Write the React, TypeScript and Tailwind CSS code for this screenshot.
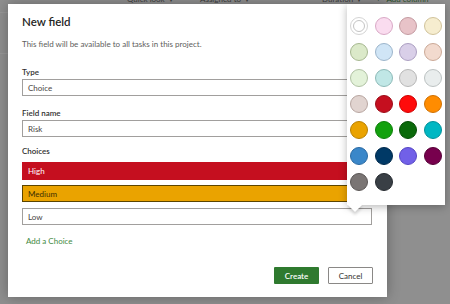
const swatches = [
  ["#ffffff", "#c8c8c8"],
  ["#fadcef", "#d9a9c6"],
  ["#e8c3c8", "#c49aa1"],
  ["#f6edcf", "#d1c39b"],
  ["#dbe9c9", "#a7b891"],
  ["#d0e5f6", "#9cb5cb"],
  ["#d9cfe8", "#ac9fc2"],
  ["#f2dace", "#cba997"],
  ["#e3f2d9", "#b0c2a3"],
  ["#c0e7e6", "#8dbab8"],
  ["#e1e1e1", "#b7b7b7"],
  ["#e9eded", "#bcc2c2"],
  ["#e1d4d0", "#b8a6a1"],
  ["#c50f1f", "#9d0c18"],
  ["#ff0b0b", "#d00000"],
  ["#ff8c00", "#d07000"],
  ["#eaa300", "#b98100"],
  ["#13a10e", "#0d800a"],
  ["#0b6a0b", "#064d06"],
  ["#00b7c3", "#00919a"],
  ["#3a87c9", "#2a6aa3"],
  ["#003966", "#002a4c"],
  ["#7160e8", "#5646c4"],
  ["#77004d", "#560037"],
  ["#7a7574", "#5b5756"],
  ["#393f45", "#262b30"],
];

const font = { fontFamily: 'Lato, "Noto Sans", sans-serif' };

function ColorPicker() {
  return (
    <div className="absolute left-[347px] top-[4px] w-[98px] h-[201px] bg-white shadow-[0_2px_8px_rgba(0,0,0,0.28)]">
      <div className="grid grid-cols-[repeat(4,18px)] gap-x-[6.5px] gap-y-[8px] pl-[3px] pt-[13px]">
        {swatches.map(([bg, border], i) =>
          i === 0 ? (
            <div
              key={i}
              className="w-[18px] h-[18px] rounded-full border border-[#d4d4d4] bg-white flex items-center justify-center"
            >
              <div className="w-[12px] h-[12px] rounded-full border border-[#c4c4c4]" />
            </div>
          ) : (
            <div
              key={i}
              className="w-[18px] h-[18px] rounded-full border"
              style={{ background: bg, borderColor: border }}
            />
          )
        )}
      </div>
      <div className="absolute left-[3px] top-[196px] w-[10px] h-[10px] bg-white rotate-45 shadow-[2px_2px_3px_rgba(0,0,0,0.15)]" />
    </div>
  );
}

function Label({ children }: { children: string }) {
  return <div className="text-[8px] leading-[12px] font-semibold text-[#323130]">{children}</div>;
}

function TextBox({ value }: { value: string }) {
  return (
    <div className="h-[17px] border border-[#a19f9d] bg-white pl-[5px] flex items-center text-[8px] text-[#484644]">
      {value}
    </div>
  );
}

export default function App() {
  return (
    <div className="relative w-[450px] h-[304px] overflow-hidden bg-[#8f8f8f]" style={font}>
      {/* page behind the overlay */}
      <div className="flex items-center h-[8px] -mt-[5px] text-[8px] text-[#3d3d3d] whitespace-nowrap">
        <span className="ml-[127px] w-[73px]">Quick look&nbsp;&nbsp;▾</span>
        <span className="w-[122px]">Assigned to&nbsp;&nbsp;▾</span>
        <span className="w-[54px]">Duration&nbsp;&nbsp;▾</span>
        <span className="text-[#2b4f2b]">+&nbsp;&nbsp;&nbsp;Add column</span>
      </div>
      <div className="h-px w-[10px] bg-[#979797] mt-[9px]" />
      <div className="h-px w-[10px] bg-[#979797] mt-[40px]" />

      {/* dialog */}
      <div className="absolute left-[8px] top-[4px] w-[379px] h-[293px] bg-white shadow-[0_0_12px_rgba(0,0,0,0.3)] px-[14px] flex flex-col">
        <div className="mt-[7px] text-[11.5px] leading-[22px] font-semibold text-[#252423]">New field</div>
        <div className="mt-[5px] text-[8px] leading-[12px] text-[#605e5c]">
          This field will be available to all tasks in this project.
        </div>
        <div className="mt-[16px] w-[350px] flex flex-col">
          <Label>Type</Label>
          <div className="mt-[1px]">
            <TextBox value="Choice" />
          </div>
          <div className="mt-[11px]">
            <Label>Field name</Label>
          </div>
          <div className="mt-[1px]">
            <TextBox value="Risk" />
          </div>
          <div className="mt-[8px]">
            <Label>Choices</Label>
          </div>
          <div className="mt-[5px] h-[18px] bg-[#c50f1f] pl-[6px] flex items-center text-[8px] text-white">High</div>
          <div className="mt-[5px] h-[17px] bg-[#eaa300] border border-[#5c4500] pl-[5px] flex items-center text-[8px] text-[#3b2f00]">
            Medium
          </div>
          <div className="mt-[6px]">
            <TextBox value="Low" />
          </div>
          <div className="mt-[10px] pl-[4px] text-[8px] leading-[12px] text-[#3f8a3f]">Add a Choice</div>
        </div>
        <div className="mt-[20px] w-[351px] flex justify-end gap-[9px]">
          <button className="w-[45px] h-[17px] bg-[#2f7a2f] text-white text-[8px] font-semibold rounded-[1px] flex items-center justify-center">
            Create
          </button>
          <button className="w-[45px] h-[17px] bg-white border border-[#8a8886] text-[#323130] text-[8px] rounded-[1px] flex items-center justify-center">
            Cancel
          </button>
        </div>
      </div>

      <ColorPicker />
    </div>
  );
}
